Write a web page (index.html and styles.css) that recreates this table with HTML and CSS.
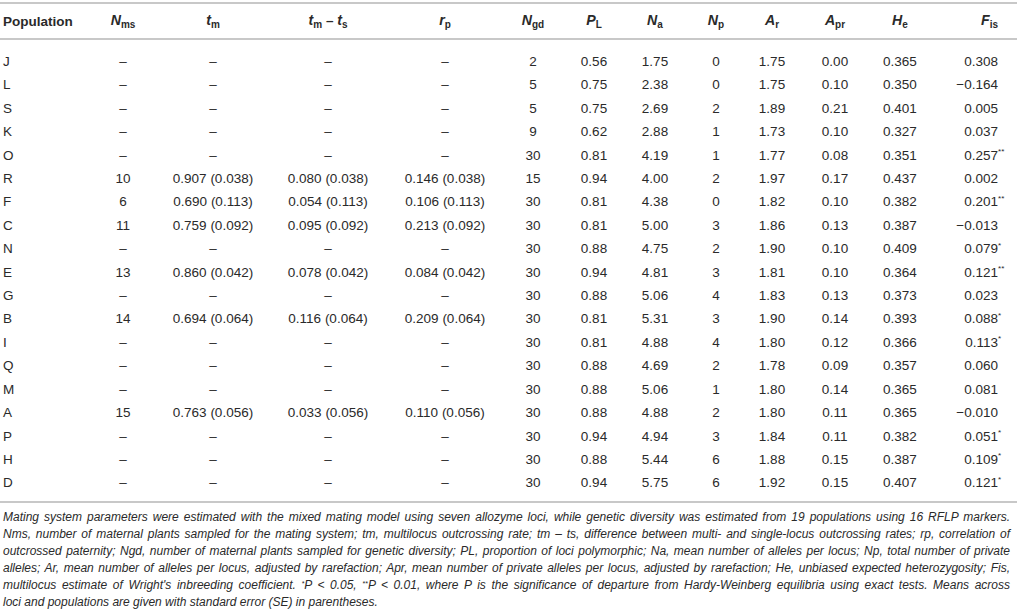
FILE: index.html
```html
<!DOCTYPE html>
<html lang="en">
<head>
  <meta charset="UTF-8" />
  <meta name="viewport" content="width=device-width, initial-scale=1.0"/>
  <title>Mating system and genetic diversity</title>
  <link rel="stylesheet" href="styles.css">
</head>
<body>
  <table class="data">
    <colgroup>
      <col class="c-pop">
      <col class="c-nms">
      <col class="c-tm">
      <col class="c-tmts">
      <col class="c-rp">
      <col class="c-ngd">
      <col class="c-pl">
      <col class="c-na">
      <col class="c-np">
      <col class="c-ar">
      <col class="c-apr">
      <col class="c-he">
      <col class="c-fis">
    </colgroup>
    <thead>
      <tr>
        <th class="pop">Population</th>
        <th><i>N</i><sub>ms</sub></th>
        <th><i>t</i><sub>m</sub></th>
        <th><i>t</i><sub>m</sub> &ndash; <i>t</i><sub>s</sub></th>
        <th><i>r</i><sub>p</sub></th>
        <th><i>N</i><sub>gd</sub></th>
        <th><i>P</i><sub>L</sub></th>
        <th><i>N</i><sub>a</sub></th>
        <th><i>N</i><sub>p</sub></th>
        <th><i>A</i><sub>r</sub></th>
        <th><i>A</i><sub>pr</sub></th>
        <th><i>H</i><sub>e</sub></th>
        <th class="fis"><i>F</i><sub>is</sub></th>
      </tr>
    </thead>
    <tbody>
      <tr><td class="pop">J</td><td>&ndash;</td><td>&ndash;</td><td>&ndash;</td><td>&ndash;</td><td>2</td><td>0.56</td><td>1.75</td><td>0</td><td>1.75</td><td>0.00</td><td>0.365</td><td class="fis">0.308</td></tr>
      <tr><td class="pop">L</td><td>&ndash;</td><td>&ndash;</td><td>&ndash;</td><td>&ndash;</td><td>5</td><td>0.75</td><td>2.38</td><td>0</td><td>1.75</td><td>0.10</td><td>0.350</td><td class="fis">&minus;0.164</td></tr>
      <tr><td class="pop">S</td><td>&ndash;</td><td>&ndash;</td><td>&ndash;</td><td>&ndash;</td><td>5</td><td>0.75</td><td>2.69</td><td>2</td><td>1.89</td><td>0.21</td><td>0.401</td><td class="fis">0.005</td></tr>
      <tr><td class="pop">K</td><td>&ndash;</td><td>&ndash;</td><td>&ndash;</td><td>&ndash;</td><td>9</td><td>0.62</td><td>2.88</td><td>1</td><td>1.73</td><td>0.10</td><td>0.327</td><td class="fis">0.037</td></tr>
      <tr><td class="pop">O</td><td>&ndash;</td><td>&ndash;</td><td>&ndash;</td><td>&ndash;</td><td>30</td><td>0.81</td><td>4.19</td><td>1</td><td>1.77</td><td>0.08</td><td>0.351</td><td class="fis">0.257<sup class="sig">**</sup></td></tr>
      <tr><td class="pop">R</td><td>10</td><td>0.907 (0.038)</td><td>0.080 (0.038)</td><td>0.146 (0.038)</td><td>15</td><td>0.94</td><td>4.00</td><td>2</td><td>1.97</td><td>0.17</td><td>0.437</td><td class="fis">0.002</td></tr>
      <tr><td class="pop">F</td><td>6</td><td>0.690 (0.113)</td><td>0.054 (0.113)</td><td>0.106 (0.113)</td><td>30</td><td>0.81</td><td>4.38</td><td>0</td><td>1.82</td><td>0.10</td><td>0.382</td><td class="fis">0.201<sup class="sig">**</sup></td></tr>
      <tr><td class="pop">C</td><td>11</td><td>0.759 (0.092)</td><td>0.095 (0.092)</td><td>0.213 (0.092)</td><td>30</td><td>0.81</td><td>5.00</td><td>3</td><td>1.86</td><td>0.13</td><td>0.387</td><td class="fis">&minus;0.013</td></tr>
      <tr><td class="pop">N</td><td>&ndash;</td><td>&ndash;</td><td>&ndash;</td><td>&ndash;</td><td>30</td><td>0.88</td><td>4.75</td><td>2</td><td>1.90</td><td>0.10</td><td>0.409</td><td class="fis">0.079<sup class="sig">*</sup></td></tr>
      <tr><td class="pop">E</td><td>13</td><td>0.860 (0.042)</td><td>0.078 (0.042)</td><td>0.084 (0.042)</td><td>30</td><td>0.94</td><td>4.81</td><td>3</td><td>1.81</td><td>0.10</td><td>0.364</td><td class="fis">0.121<sup class="sig">**</sup></td></tr>
      <tr><td class="pop">G</td><td>&ndash;</td><td>&ndash;</td><td>&ndash;</td><td>&ndash;</td><td>30</td><td>0.88</td><td>5.06</td><td>4</td><td>1.83</td><td>0.13</td><td>0.373</td><td class="fis">0.023</td></tr>
      <tr><td class="pop">B</td><td>14</td><td>0.694 (0.064)</td><td>0.116 (0.064)</td><td>0.209 (0.064)</td><td>30</td><td>0.81</td><td>5.31</td><td>3</td><td>1.90</td><td>0.14</td><td>0.393</td><td class="fis">0.088<sup class="sig">*</sup></td></tr>
      <tr><td class="pop">I</td><td>&ndash;</td><td>&ndash;</td><td>&ndash;</td><td>&ndash;</td><td>30</td><td>0.81</td><td>4.88</td><td>4</td><td>1.80</td><td>0.12</td><td>0.366</td><td class="fis">0.113<sup class="sig">*</sup></td></tr>
      <tr><td class="pop">Q</td><td>&ndash;</td><td>&ndash;</td><td>&ndash;</td><td>&ndash;</td><td>30</td><td>0.88</td><td>4.69</td><td>2</td><td>1.78</td><td>0.09</td><td>0.357</td><td class="fis">0.060</td></tr>
      <tr><td class="pop">M</td><td>&ndash;</td><td>&ndash;</td><td>&ndash;</td><td>&ndash;</td><td>30</td><td>0.88</td><td>5.06</td><td>1</td><td>1.80</td><td>0.14</td><td>0.365</td><td class="fis">0.081</td></tr>
      <tr><td class="pop">A</td><td>15</td><td>0.763 (0.056)</td><td>0.033 (0.056)</td><td>0.110 (0.056)</td><td>30</td><td>0.88</td><td>4.88</td><td>2</td><td>1.80</td><td>0.11</td><td>0.365</td><td class="fis">&minus;0.010</td></tr>
      <tr><td class="pop">P</td><td>&ndash;</td><td>&ndash;</td><td>&ndash;</td><td>&ndash;</td><td>30</td><td>0.94</td><td>4.94</td><td>3</td><td>1.84</td><td>0.11</td><td>0.382</td><td class="fis">0.051<sup class="sig">*</sup></td></tr>
      <tr><td class="pop">H</td><td>&ndash;</td><td>&ndash;</td><td>&ndash;</td><td>&ndash;</td><td>30</td><td>0.88</td><td>5.44</td><td>6</td><td>1.88</td><td>0.15</td><td>0.387</td><td class="fis">0.109<sup class="sig">*</sup></td></tr>
      <tr><td class="pop">D</td><td>&ndash;</td><td>&ndash;</td><td>&ndash;</td><td>&ndash;</td><td>30</td><td>0.94</td><td>5.75</td><td>6</td><td>1.92</td><td>0.15</td><td>0.407</td><td class="fis">0.121<sup class="sig">*</sup></td></tr>
    </tbody>
  </table>

  <div class="notes">
    <p class="full">Mating system parameters were estimated with the mixed mating model using seven allozyme loci, while genetic diversity was estimated from 19 populations using 16 RFLP markers.</p>
    <p class="full">Nms, number of maternal plants sampled for the mating system; tm, multilocus outcrossing rate; tm &ndash; ts, difference between multi- and single-locus outcrossing rates; rp, correlation of outcrossed paternity; Ngd, number of maternal plants sampled for genetic diversity; PL, proportion of loci polymorphic; Na, mean number of alleles per locus; Np, total number of private alleles; Ar, mean number of alleles per locus, adjusted by rarefaction; Apr, mean number of private alleles per locus, adjusted by rarefaction; He, unbiased expected heterozygosity; Fis, multilocus estimate of Wright's inbreeding coefficient. <span class="star">*</span>P &lt; 0.05, <span class="star">**</span>P &lt; 0.01, where P is the significance of departure from Hardy-Weinberg equilibria using exact tests. Means across</p>
    <p>loci and populations are given with standard error (SE) in parentheses.</p>
  </div>
</body>
</html>
```

FILE: styles.css
```css
body {
  margin: 0;
  font-family: "Liberation Sans", Arial, sans-serif;
  color: #2a2a2a;
  background: #fff;
}

.data {
  width: 1017px;
  border-collapse: collapse;
  table-layout: fixed;
  margin-top: 2px;
  font-size: 13.5px;
}

.c-pop { width: 85px; }
.c-nms { width: 76px; }
.c-tm { width: 104px; }
.c-tmts { width: 126px; }
.c-rp { width: 108px; }
.c-ngd { width: 68px; }
.c-pl { width: 54px; }
.c-na { width: 68px; }
.c-np { width: 54px; }
.c-ar { width: 58px; }
.c-apr { width: 68px; }
.c-he { width: 62px; }
.c-fis { width: 86px; }

.data th {
  height: 34px;
  padding: 0;
  font-weight: bold;
  text-align: center;
  border-top: 2px solid #c8c8c8;
  border-bottom: 2px solid #c8c8c8;
  white-space: nowrap;
}

.data th i {
  font-size: 1.05em;
}

.data th sub {
  font-size: 0.74em;
  vertical-align: -0.3em;
}

.data td {
  padding: 0;
  line-height: 23.4px;
  text-align: center;
  white-space: nowrap;
}

.data tbody tr:first-child td {
  padding-top: 10px;
}

.data tbody tr:last-child td {
  padding-bottom: 6px;
  border-bottom: 2px solid #c8c8c8;
}

.data .pop {
  text-align: left;
  padding-left: 3px;
}

.data .fis {
  text-align: right;
  padding-right: 19px;
}

.sig {
  display: inline-block;
  width: 0;
  font-size: 0.6em;
  line-height: 1;
  vertical-align: 0.7em;
}

.notes {
  padding: 6px 7px 0 3px;
  font-size: 12px;
  line-height: 17px;
  font-style: italic;
  text-align: justify;
}

.notes p {
  margin: 0;
}

.notes .full {
  text-align-last: justify;
}

.star {
  font-size: 0.6em;
  vertical-align: 0.45em;
  line-height: 0;
}
```
